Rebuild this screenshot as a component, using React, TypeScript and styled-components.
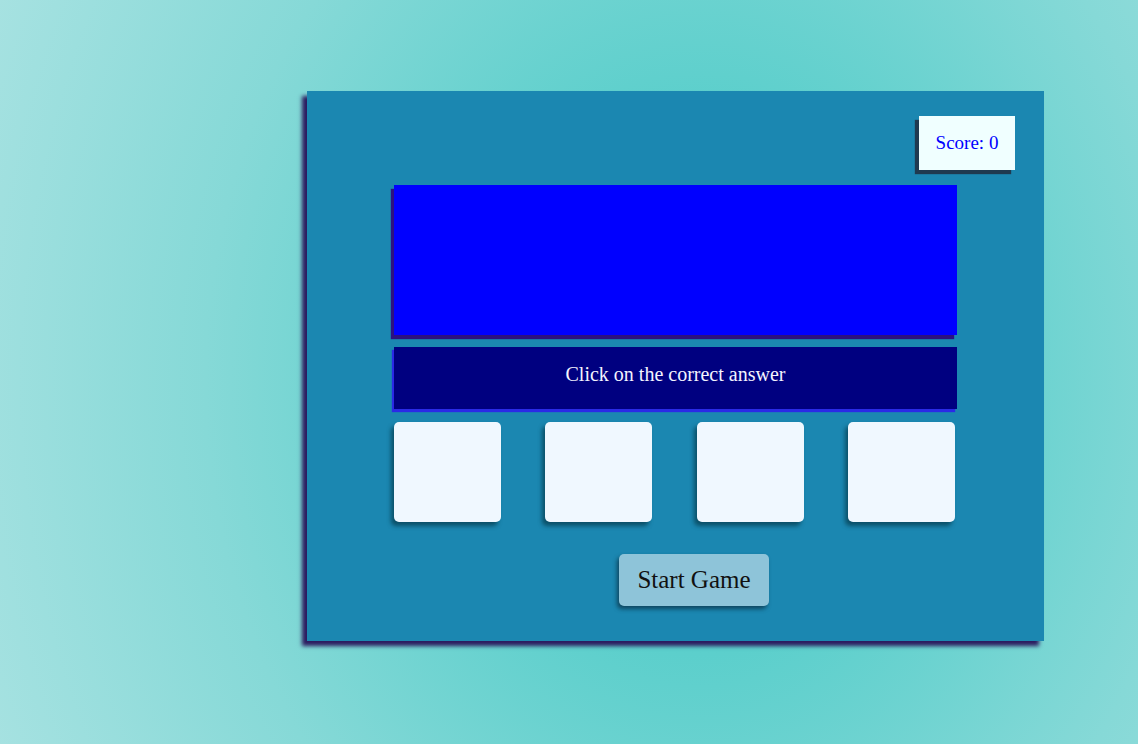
import React, { useState } from 'react'
import styled, { createGlobalStyle } from 'styled-components'

const GlobalStyle = createGlobalStyle`
  html, body {
    margin: 0;
    padding: 0;
  }

  body {
    font-family: "Liberation Serif", "Times New Roman", serif;
    min-height: 100vh;
    background: radial-gradient(ellipse 900px 1100px at 700px 380px, #47cbc8 0%, #5ccfcc 25%, #86d9d7 55%, #b6e6e6 100%);
  }
`

const Page = styled.div`
  min-height: 100vh;
  display: flex;
  align-items: flex-start;
  padding: 91px 0 0 307px;
  box-sizing: border-box;
`

const Board = styled.main`
  width: 737px;
  height: 550px;
  box-sizing: border-box;
  background: #1b87b1;
  box-shadow: -5px 5px 4px #2c1b5f;
  display: flex;
  flex-direction: column;
  align-items: center;
  padding: 25px 29px 0 29px;
`

const TopRow = styled.div`
  align-self: stretch;
  display: flex;
  justify-content: flex-end;
`

const ScoreBox = styled.div`
  width: 96px;
  height: 54px;
  display: flex;
  align-items: center;
  justify-content: center;
  background: #f0ffff;
  color: #0000ff;
  font-size: 19px;
  box-shadow: -4px 4px 1px #1f3a50;
`

const Content = styled.div`
  width: 563px;
  margin-top: 15px;
  display: flex;
  flex-direction: column;
`

const QuestionScreen = styled.div`
  height: 150px;
  background: #0000ff;
  box-shadow: -3px 4px 1px #2d1180;
`

const Prompt = styled.div`
  height: 62px;
  margin-top: 12px;
  background: #000080;
  color: #f4f4ff;
  font-size: 20px;
  display: flex;
  justify-content: center;
  padding-top: 16px;
  box-sizing: border-box;
  box-shadow: -2px 3px 1px #2a2ae6;
`

const Answers = styled.div`
  margin-top: 13px;
  display: flex;
  justify-content: space-between;
  padding-right: 2px;
`

const AnswerCard = styled.button<{ $picked?: boolean }>`
  width: 107px;
  height: 100px;
  border: none;
  border-radius: 5px;
  background: ${({ $picked }) => ($picked ? '#d6ecff' : '#f0f8ff')};
  box-shadow: -3px 4px 4px rgba(8, 70, 92, 0.85);
  cursor: pointer;
  padding: 0;
`

const Footer = styled.div`
  margin-top: 32px;
  display: flex;
  padding-left: 225px;
`

const StartButton = styled.button`
  width: 150px;
  height: 52px;
  border: none;
  border-radius: 5px;
  background: #8ec4d9;
  color: #111;
  font-family: "Liberation Serif", "Times New Roman", serif;
  font-size: 25px;
  box-shadow: -2px 3px 4px rgba(10, 50, 70, 0.75);
  cursor: pointer;
`

const App = () => {
  const [score] = useState(0)
  const [picked, setPicked] = useState<number | null>(null)

  return (
    <>
      <GlobalStyle />
      <Page>
        <Board>
          <TopRow>
            <ScoreBox>Score: {score}</ScoreBox>
          </TopRow>
          <Content>
            <QuestionScreen />
            <Prompt>Click on the correct answer</Prompt>
            <Answers>
              {[0, 1, 2, 3].map((i) => (
                <AnswerCard key={i} $picked={picked === i} onClick={() => setPicked(i)} />
              ))}
            </Answers>
            <Footer>
              <StartButton type="button">Start Game</StartButton>
            </Footer>
          </Content>
        </Board>
      </Page>
    </>
  )
}

export default App
